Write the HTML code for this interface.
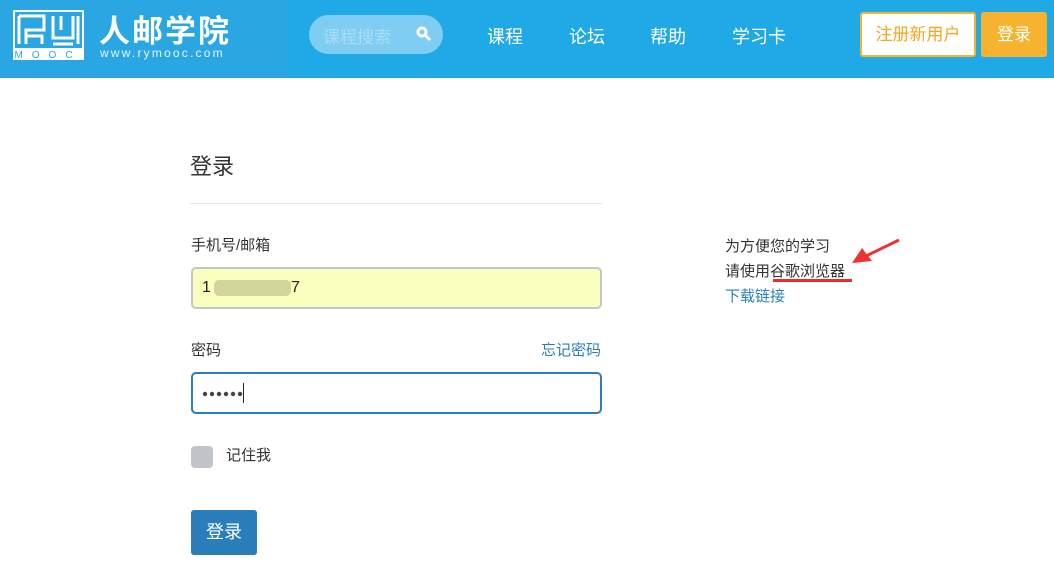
<!DOCTYPE html>
<html><head><meta charset="utf-8"><style>
*{margin:0;padding:0;box-sizing:border-box}
body{width:1054px;height:562px;background:#fff;font-family:"Liberation Sans","Noto Sans CJK SC",sans-serif;position:relative;overflow:hidden;color:#333}
.hd{position:absolute;left:0;top:0;width:1054px;height:78px;background:#1fa9e7}
.logobg{position:absolute;left:0;top:0;width:288px;height:78px;background:#2aa7e2}
.a{position:absolute;white-space:nowrap}
</style></head><body>
<div class="hd"></div><div class="logobg"></div>
<svg class="a" style="left:13px;top:10px" width="71" height="50" viewBox="0 0 71 50">
<rect x="1" y="1" width="69" height="48" fill="none" stroke="#fff" stroke-width="2"/>
<rect x="0" y="38" width="71" height="12" fill="#fff"/>
<text x="35" y="48" fill="#2aa7e2" font-size="10" text-anchor="middle" letter-spacing="9" font-family="Liberation Sans">MOOC</text>
<path d="M6 6h25v14h-18v6h16v8M13 20v14M6 6v28M40 6v22h20v-22M48 6v14M65 6v28M40 34h20" fill="none" stroke="#fff" stroke-width="3"/>
</svg>
<div class="a" style="left:99px;top:6px;font-size:31px;font-weight:bold;color:#fff;letter-spacing:2px">人邮学院</div>
<div class="a" style="left:100px;top:46px;font-size:12px;color:#e8f6fd;letter-spacing:2.2px">www.rymooc.com</div>
<div class="a" style="left:309px;top:15px;width:134px;height:39px;border-radius:20px;background:#7fcdf2"></div>
<div class="a" style="left:323px;top:23px;font-size:17px;color:#a9def6">课程搜索</div>
<svg class="a" style="left:416px;top:26px" width="16" height="16"><circle cx="6" cy="6" r="4" fill="none" stroke="#fff" stroke-width="3"/><path d="M9 9l5 5" stroke="#fff" stroke-width="3"/></svg>
<div class="a" style="left:487px;top:23px;font-size:18px;color:#fff">课程</div>
<div class="a" style="left:569px;top:23px;font-size:18px;color:#fff">论坛</div>
<div class="a" style="left:650px;top:23px;font-size:18px;color:#fff">帮助</div>
<div class="a" style="left:732px;top:23px;font-size:18px;color:#fff">学习卡</div>
<div class="a" style="left:860px;top:12px;width:116px;height:45px;background:#fff;border:2px solid #f7b32d;border-radius:3px;color:#f5a623;font-size:17px;text-align:center;line-height:41px">注册新用户</div>
<div class="a" style="left:981px;top:12px;width:66px;height:45px;background:#f7b32d;border-radius:3px;color:#fff;font-size:17px;text-align:center;line-height:45px">登录</div>

<div class="a" style="left:190px;top:149px;font-size:22px;color:#333">登录</div>
<div class="a" style="left:190px;top:203px;width:412px;height:1px;background:#e5e5e5"></div>
<div class="a" style="left:191px;top:234px;font-size:15px;color:#333">手机号/邮箱</div>
<div class="a" style="left:191px;top:267px;width:411px;height:42px;background:#faffbd;border:2px solid #c4c7ca;border-radius:5px"></div>
<div class="a" style="left:202px;top:279px;font-size:16px;color:#222">1</div>
<div class="a" style="left:214px;top:280px;width:77px;height:16px;background:#d3d59c;border-radius:5px"></div>
<div class="a" style="left:291px;top:279px;font-size:16px;color:#222">7</div>
<div class="a" style="left:191px;top:339px;font-size:15px;color:#333">密码</div>
<div class="a" style="left:541px;top:339px;font-size:15px;color:#2a7fba">忘记密码</div>
<div class="a" style="left:191px;top:372px;width:411px;height:42px;border:2px solid #2a7fba;border-radius:5px"></div>
<svg class="a" style="left:202px;top:390px" width="42" height="8"><g fill="#444"><circle cx="3" cy="4" r="2.2"/><circle cx="10" cy="4" r="2.2"/><circle cx="17" cy="4" r="2.2"/><circle cx="24" cy="4" r="2.2"/><circle cx="31" cy="4" r="2.2"/><circle cx="38" cy="4" r="2.2"/></g></svg>
<div class="a" style="left:243px;top:383px;width:1px;height:20px;background:#222"></div>
<div class="a" style="left:191px;top:446px;width:22px;height:22px;background:#c1c5c9;border-radius:4px"></div>
<div class="a" style="left:226px;top:444px;font-size:15px;color:#333">记住我</div>
<div class="a" style="left:191px;top:510px;width:66px;height:45px;background:#2a7fba;border-radius:3px;color:#fff;font-size:18px;text-align:center;line-height:45px">登录</div>

<div class="a" style="left:725px;top:234px;font-size:15px;color:#333;line-height:25px">为方便您的学习<br>请使用谷歌浏览器<br><span style="color:#2a7fba">下载链接</span></div>
<div class="a" style="left:773px;top:279px;width:79px;height:3px;background:#ee2b2b"></div>
<svg class="a" style="left:848px;top:236px" width="56" height="32"><path d="M51 4L18 20" stroke="#ee3333" stroke-width="3"/><path d="M4 27L14 12L24 25Z" fill="#ee3333"/></svg>
</body></html>
